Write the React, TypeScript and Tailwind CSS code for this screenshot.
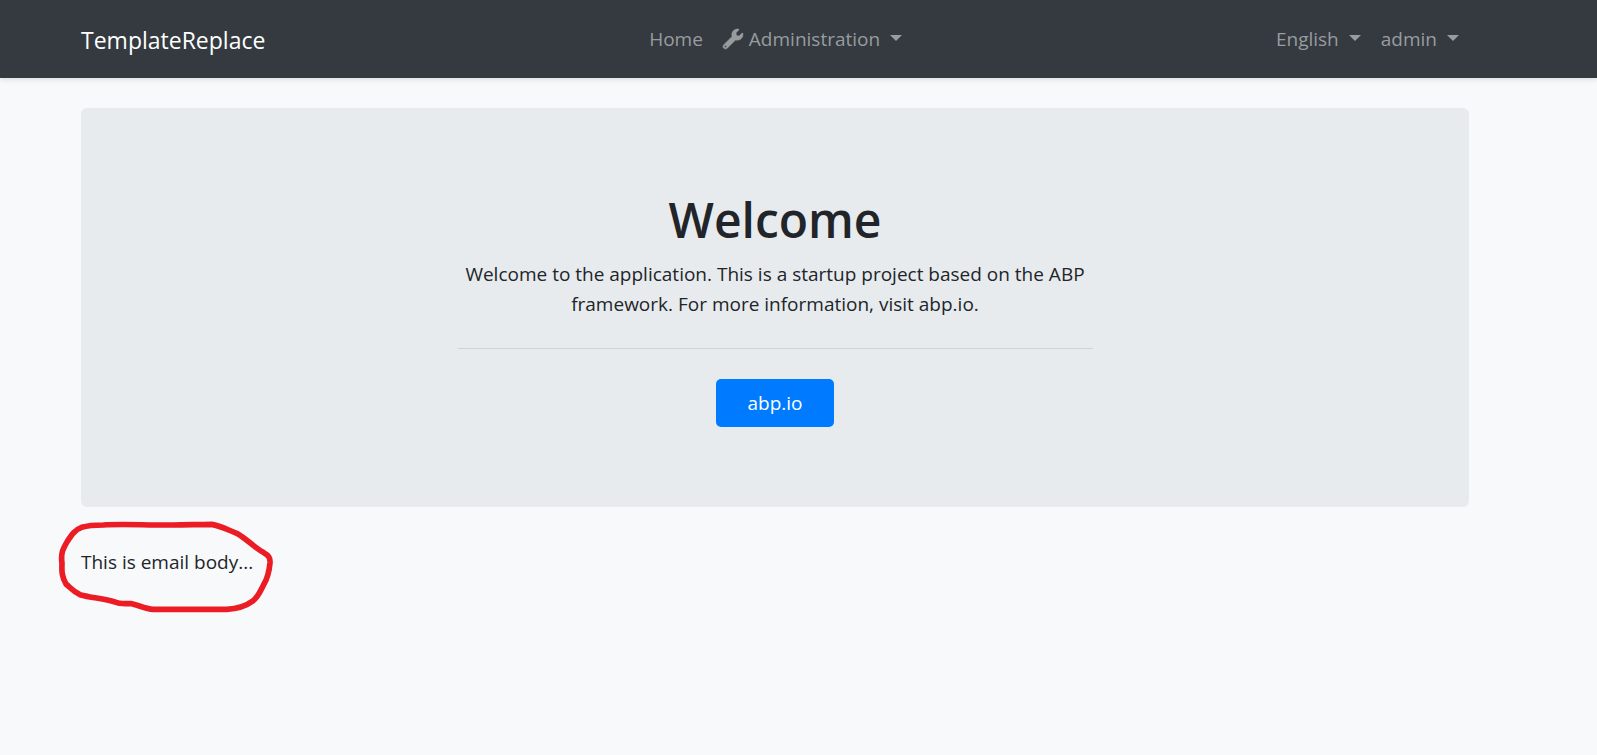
import type { ReactNode } from "react";

function Caret() {
  return (
    <svg aria-hidden="true" className="mb-0.5 h-1.5 w-3 shrink-0" viewBox="0 0 12 6" fill="currentColor">
      <path d="M0 0h12L6 6z" />
    </svg>
  );
}

function Wrench() {
  return (
    <svg aria-hidden="true" className="size-5 shrink-0 overflow-visible" viewBox="0 0 512 512" fill="currentColor" stroke="currentColor" strokeWidth="12">
      <path d="M507.73 109.1c-2.24-9.03-13.54-12.09-20.12-5.51l-74.36 74.36-67.88-11.31-11.31-67.88 74.36-74.36c6.62-6.62 3.43-17.9-5.66-20.16-47.38-11.74-99.55.91-136.58 37.93-39.64 39.64-50.55 97.1-34.05 147.2L18.74 402.76c-24.99 24.99-24.99 65.51 0 90.5 24.99 24.99 65.51 24.99 90.5 0l213.21-213.21c50.12 16.71 107.47 5.68 147.37-34.22 37.07-37.07 49.7-89.32 37.91-136.73zM64 472c-13.25 0-24-10.75-24-24 0-13.26 10.75-24 24-24s24 10.74 24 24c0 13.25-10.75 24-24 24z" />
    </svg>
  );
}

function MenuButton({ children }: { children: ReactNode }) {
  return (
    <button type="button" aria-haspopup="menu" className="flex items-center gap-2.5 px-2.5 py-2">
      {children}
      <Caret />
    </button>
  );
}

export default function App() {
  return (
    <div className="min-h-screen bg-[#f8f9fa] font-['Open_Sans','Noto_Sans',sans-serif] text-[19px] leading-[30px] text-[#212529]">
      <header className="bg-[#343a40] shadow-[0_2px_5px_rgba(0,0,0,0.1)]">
        <nav className="flex h-[78px] items-center justify-between pr-32 pl-[81px] text-[#999c9f]">
          <a href="#home" className="mr-5 pt-0.5 text-[23px] text-white">
            TemplateReplace
          </a>
          <div className="flex items-center">
            <a href="#home" className="px-2.5 py-2">
              Home
            </a>
            <MenuButton>
              <span className="flex items-center gap-1.5">
                <Wrench />
                Administration
              </span>
            </MenuButton>
          </div>
          <div className="flex items-center">
            <MenuButton>English</MenuButton>
            <MenuButton>admin</MenuButton>
          </div>
        </nav>
      </header>
      <main className="pt-[30px] pr-32 pl-[81px]">
        <section className="rounded-md bg-[#e8ebee] px-5 pt-[82px] pb-20 text-center">
          <div className="mx-auto max-w-[635px]">
            <h1 className="mb-[9px] text-5xl leading-[60px] font-semibold">Welcome</h1>
            <p>
              Welcome to the application. This is a startup project based on the ABP framework. For
              more information, visit abp.io.
            </p>
            <hr className="mt-[29px] mb-[30px] border-[#cfd3d6]" />
            <a
              href="#abp"
              className="inline-block rounded-[5px] bg-[#007bff] px-[31px] py-[9px] align-top text-white"
            >
              abp.io
            </a>
          </div>
        </section>
        <div className="relative mt-10 w-fit">
          <p>This is email body...</p>
          <svg
            aria-hidden="true"
            className="pointer-events-none absolute -top-[57px] -left-[41px] h-[140px] w-[260px]"
            viewBox="0 0 780 420"
            fill="none"
            stroke="#ec1c24"
            strokeWidth="17"
            strokeLinecap="round"
            strokeLinejoin="round"
          >
            <path d="M190 105C250 101 320 106 400 105C450 104 485 104 515 103C540 107 560 118 590 130C620 147 640 170 670 187C685 196 691 202 690 218C688 240 686 258 672 282C660 305 655 322 637 334C620 347 600 356 560 358L340 358C315 356 300 347 275 341C255 340 240 343 225 336C190 325 155 324 120 314C100 305 92 294 78 282C65 258 65 245 66 220C62 190 68 178 82 154C95 134 105 119 125 112C145 106 170 105 190 105Z" />
          </svg>
        </div>
      </main>
    </div>
  );
}
